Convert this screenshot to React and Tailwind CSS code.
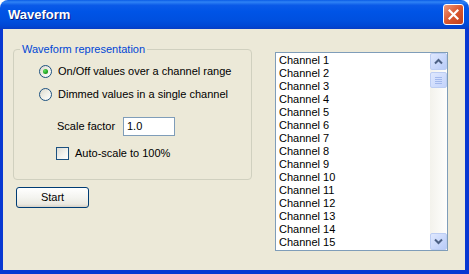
import React from 'react';

const channels = Array.from({ length: 15 }, (_, i) => `Channel ${i + 1}`);

function Radio({ checked }) {
  return (
    <div className="relative w-[13px] h-[13px] shrink-0 rounded-full border border-[#1c5180] bg-[linear-gradient(135deg,#dcd9cd_0%,#f2f1ea_55%,#ffffff_100%)]">
      {checked && (
        <div className="absolute left-[3px] top-[3px] w-[5px] h-[5px] rounded-full bg-[radial-gradient(circle_at_35%_35%,#5fe35f,#21a121_60%,#1a8a1a)]" />
      )}
    </div>
  );
}

function Chevron({ down }) {
  return (
    <svg width="9" height="7" viewBox="0 0 9 7">
      <path
        d={down ? 'M1 1.5 L4.5 5 L8 1.5' : 'M1 5.5 L4.5 2 L8 5.5'}
        fill="none"
        stroke="#4d6185"
        strokeWidth="2"
      />
    </svg>
  );
}

function ScrollBtn({ down }) {
  return (
    <div className="w-[17px] h-[17px] flex items-center justify-center rounded-[2px] border border-[#bccdf3] bg-[linear-gradient(135deg,#dfe8fe,#b8cbf8)]">
      <Chevron down={down} />
    </div>
  );
}

export default function App() {
  return (
    <div className="w-[469px] h-[274px] flex flex-col bg-white text-[11px] text-black [font-family:'Liberation_Sans',Arial,sans-serif]">
      {/* Title bar */}
      <div className="h-[29px] shrink-0 flex items-center justify-between rounded-t-[8px] pl-[8px] pr-[5px] bg-[linear-gradient(to_bottom,#0a5ce6_0%,#2f83f5_7%,#0a5ae8_18%,#0054e6_40%,#0050df_70%,#0047d4_90%,#083dc4_100%)]">
        <span className="text-white font-bold text-[13px] [text-shadow:1px_1px_#0a1d7a]">Waveform</span>
        <div className="w-[21px] h-[21px] flex items-center justify-center rounded-[3px] border border-white bg-[linear-gradient(135deg,#ef9a7c,#d9572f_50%,#c2401c)]">
          <svg width="11" height="11" viewBox="0 0 11 11">
            <path d="M1.5 1.5 L9.5 9.5 M9.5 1.5 L1.5 9.5" stroke="#fff" strokeWidth="2.2" strokeLinecap="square" />
          </svg>
        </div>
      </div>

      {/* Frame + client */}
      <div className="flex-1 flex border-l-[3px] border-r-[4px] border-b-[4px] border-[#0838d2] bg-[#ece9d8]">
        {/* Left column */}
        <div className="w-[272px] shrink-0 pl-[10px] pt-[20px]">
          <div className="relative w-[239px] h-[131px] rounded-[4px] border border-[#d0d0bf] pt-[15px]">
            <span className="absolute -top-[7px] left-[6px] px-[2px] leading-[13px] bg-[#ece9d8] text-[#0046d5]">
              Waveform representation
            </span>
            <div className="flex items-center h-[13px] ml-[25px] gap-[6px]">
              <Radio checked />
              <span>On/Off values over a channel range</span>
            </div>
            <div className="flex items-center h-[13px] ml-[25px] mt-[10px] gap-[6px]">
              <Radio />
              <span>Dimmed values in a single channel</span>
            </div>
            <div className="flex items-center h-[19px] ml-[43px] mt-[16px]">
              <span className="w-[66px]">Scale factor</span>
              <div className="w-[52px] h-[19px] border border-[#7f9db9] bg-white pl-[3px] leading-[17px]">1.0</div>
            </div>
            <div className="flex items-center h-[13px] ml-[42px] mt-[11px] gap-[6px]">
              <div className="w-[13px] h-[13px] shrink-0 border border-[#1c5180] bg-[linear-gradient(135deg,#dcdcd5,#f5f4ef_60%,#ffffff)]" />
              <span>Auto-scale to 100%</span>
            </div>
          </div>
          <button className="mt-[7px] ml-[3px] w-[73px] h-[21px] flex items-center justify-center rounded-[3px] border border-[#003c74] bg-[linear-gradient(to_bottom,#ffffff_0%,#f4f4f0_50%,#ebe9e1_85%,#d6d0c5_100%)]">
            Start
          </button>
        </div>

        {/* List box */}
        <div className="mt-[23px] w-[173px] h-[199px] flex border border-[#7f9db9] bg-white">
          <div className="flex-1 overflow-hidden pt-[1px] pl-[3px]">
            {channels.map((c) => (
              <div key={c} className="h-[13px] leading-[13px]">{c}</div>
            ))}
          </div>
          <div className="w-[17px] flex flex-col bg-[linear-gradient(to_right,#f3f2ec,#fefefd)]">
            <ScrollBtn />
            <div className="mt-[2px] h-[16px] flex flex-col items-center justify-center gap-[1px] rounded-[2px] border border-[#bccdf3] bg-[linear-gradient(135deg,#dfe8fe,#c3d3fb)]">
              <div className="w-[7px] h-[1px] bg-[#a2b8ec]" />
              <div className="w-[7px] h-[1px] bg-[#a2b8ec]" />
              <div className="w-[7px] h-[1px] bg-[#a2b8ec]" />
              <div className="w-[7px] h-[1px] bg-[#a2b8ec]" />
            </div>
            <div className="flex-1" />
            <ScrollBtn down />
          </div>
        </div>
      </div>
    </div>
  );
}
